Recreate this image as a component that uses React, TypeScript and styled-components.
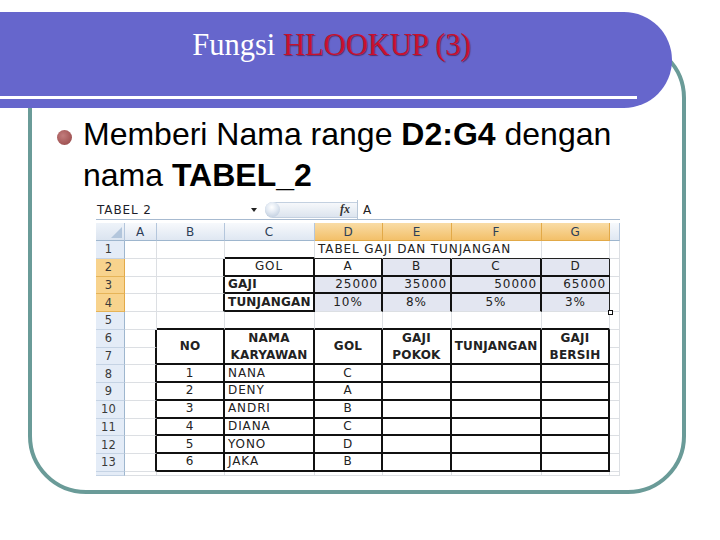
import React from 'react';
import styled, { createGlobalStyle } from 'styled-components';

const Global = createGlobalStyle`
  html, body { margin: 0; padding: 0; background: #fff; }
  body { font-family: "Liberation Sans", Arial, sans-serif; }
`;

const Slide = styled.div`
  width: 720px;
  height: 540px;
  display: grid;
  grid-template: 1fr / 1fr;
  overflow: hidden;
  background: #fff;
`;

const Frame = styled.div`
  grid-area: 1 / 1;
  margin: 40px 34px 46px 28px;
  border: 4px solid #6a9b98;
  border-radius: 58px;
`;

const Header = styled.header`
  grid-area: 1 / 1;
  align-self: start;
  margin-top: 12px;
  width: 672px;
  height: 96px;
  background: #6666cc;
  border-radius: 0 48px 48px 0;
  display: flex;
  flex-direction: column;
  z-index: 1;
`;

const Title = styled.h1`
  margin: 15px 0 0;
  padding-right: 9px;
  text-align: center;
  font: 400 30.5px/36px "Liberation Serif", "Times New Roman", serif;
  color: #fff;
`;

const Accent = styled.span`
  color: #c8102e;
  text-shadow: 1px 1px 1px rgba(70, 0, 20, 0.55);
`;

const Rule = styled.div`
  margin-top: auto;
  margin-bottom: 9px;
  width: 637px;
  height: 3px;
  background: #fff;
`;

const Content = styled.main`
  grid-area: 1 / 1;
  z-index: 2;
  padding-top: 114px;
  display: flex;
  flex-direction: column;
`;

const BulletRow = styled.div`
  display: flex;
  align-items: flex-start;
  padding-left: 57px;
`;

const Dot = styled.span`
  flex-shrink: 0;
  width: 15px;
  height: 15px;
  margin-top: 16px;
  margin-right: 11px;
  border-radius: 50%;
  background: radial-gradient(circle at 40% 38%, #c27c7c 0%, #a65a5a 60%, #8e4848 100%);
`;

const BulletText = styled.p`
  margin: 0;
  max-width: 580px;
  font: 400 32px/41px "Liberation Sans", Arial, sans-serif;
  color: #000;
`;

const Strong = styled.strong`
  font-weight: 700;
`;

const Sheet = styled.div`
  margin: 4px 0 0 96px;
  width: 524px;
  display: flex;
  flex-direction: column;
  font-family: "DejaVu Sans", Verdana, sans-serif;
  font-size: 12px;
  letter-spacing: 0.9px;
  color: #222;
`;

const FormulaBar = styled.div`
  height: 19px;
  display: flex;
  align-items: center;
  border-bottom: 1px solid #a7bad0;
  margin-bottom: 3px;
`;

const NameBox = styled.div`
  width: 166px;
  box-sizing: border-box;
  padding: 0 5px 0 1px;
  display: flex;
  align-items: center;
  justify-content: space-between;
  color: #1d1d2a;
`;

const FxButton = styled.div`
  margin-left: 3px;
  width: 92px;
  height: 16px;
  box-sizing: border-box;
  display: flex;
  align-items: center;
  justify-content: space-between;
  border-radius: 8px 0 0 8px;
  border: 1px solid #c3d0e0;
  border-right: none;
  background: linear-gradient(#f6f8fb, #dce4ee);
  padding-right: 7px;
`;

const Knob = styled.span`
  width: 15px;
  height: 15px;
  margin-left: -1px;
  border-radius: 50%;
  background: radial-gradient(circle at 45% 35%, #ffffff 0%, #e3eaf3 40%, #b3c3d7 100%);
`;

const Fx = styled.span`
  font: italic 700 12px "Liberation Serif", serif;
  letter-spacing: 0;
  color: #333;
`;

const FormulaSep = styled.span`
  width: 1px;
  height: 19px;
  background: #b8c7d8;
  margin-right: 5px;
`;

const Grid = styled.div`
  display: grid;
  grid-template-columns: 29px 32px 68px 90px 68px 69px 90px 68px 10px;
  grid-template-rows: 18px repeat(13, 17.75px) 4px;
`;

type Edge = 'grid' | 'thick' | 'thin' | 'none';

const edgeCss = (e: Edge) =>
  e === 'thick'
    ? '2px solid #111'
    : e === 'thin'
    ? '1px solid #222'
    : e === 'none'
    ? '1px solid transparent'
    : '1px solid #dcdfe3';

const ColHead = styled.div<{ $sel?: boolean }>`
  display: flex;
  align-items: center;
  justify-content: center;
  border-right: 1px solid ${(p) => (p.$sel ? '#e2a948' : '#b4c6dc')};
  border-bottom: 1px solid ${(p) => (p.$sel ? '#e2a948' : '#9eb6ce')};
  background: ${(p) =>
    p.$sel ? 'linear-gradient(#f9dca6, #f3c069)' : 'linear-gradient(#f7f9fc, #dfe7f2)'};
  color: #2c3e57;
`;

const Corner = styled.div`
  display: flex;
  align-items: flex-end;
  justify-content: flex-end;
  padding: 0 2px 2px 0;
  border-right: 1px solid #b4c6dc;
  border-bottom: 1px solid #9eb6ce;
  background: linear-gradient(#eef3f9, #dbe4f0);
`;

const RowHead = styled.div<{ $sel?: boolean }>`
  display: flex;
  align-items: center;
  justify-content: center;
  padding-right: 3px;
  border-right: 1px solid ${(p) => (p.$sel ? '#e2a948' : '#9eb6ce')};
  border-bottom: 1px solid ${(p) => (p.$sel ? '#e6b458' : '#c5d3e4')};
  background: ${(p) => (p.$sel ? '#f8d38d' : '#e4ecf7')};
  color: #3a3a3a;
  font-size: 11.5px;
  letter-spacing: 0.3px;
  overflow: hidden;
`;

const Cell = styled.div<{
  $r: Edge;
  $b: Edge;
  $bg?: string;
  $align?: 'left' | 'center' | 'right';
  $bold?: boolean;
}>`
  position: relative;
  min-width: 0;
  display: flex;
  flex-direction: column;
  justify-content: center;
  align-items: ${(p) =>
    p.$align === 'right' ? 'flex-end' : p.$align === 'center' ? 'center' : 'flex-start'};
  padding: 0 3px;
  border-right: ${(p) => edgeCss(p.$r)};
  border-bottom: ${(p) => edgeCss(p.$b)};
  background: ${(p) => p.$bg ?? 'transparent'};
  font-weight: ${(p) => (p.$bold ? 700 : 400)};
  letter-spacing: ${(p) => (p.$bold ? '0.2px' : '0.9px')};
  white-space: nowrap;
  line-height: 17px;
`;

const Handle = styled.span`
  position: absolute;
  right: -4px;
  bottom: -4px;
  width: 5px;
  height: 5px;
  box-sizing: border-box;
  border: 1px solid #111;
  background: #fff;
  z-index: 3;
`;

type Content = { text: string[]; align?: 'left' | 'center' | 'right'; bold?: boolean };

const data: Record<string, Content> = {
  '1-4': { text: ['TABEL GAJI DAN TUNJANGAN'] },
  '2-3': { text: ['GOL'], align: 'center' },
  '2-4': { text: ['A'], align: 'center' },
  '2-5': { text: ['B'], align: 'center' },
  '2-6': { text: ['C'], align: 'center' },
  '2-7': { text: ['D'], align: 'center' },
  '3-3': { text: ['GAJI'], bold: true },
  '3-4': { text: ['25000'], align: 'right' },
  '3-5': { text: ['35000'], align: 'right' },
  '3-6': { text: ['50000'], align: 'right' },
  '3-7': { text: ['65000'], align: 'right' },
  '4-3': { text: ['TUNJANGAN'], bold: true },
  '4-4': { text: ['10%'], align: 'center' },
  '4-5': { text: ['8%'], align: 'center' },
  '4-6': { text: ['5%'], align: 'center' },
  '4-7': { text: ['3%'], align: 'center' },
};

const mergedHead: Content[] = [
  { text: ['NO'], align: 'center', bold: true },
  { text: ['NAMA', 'KARYAWAN'], align: 'center', bold: true },
  { text: ['GOL'], align: 'center', bold: true },
  { text: ['GAJI', 'POKOK'], align: 'center', bold: true },
  { text: ['TUNJANGAN'], align: 'center', bold: true },
  { text: ['GAJI', 'BERSIH'], align: 'center', bold: true },
];

const employees: [string, string, string][] = [
  ['1', 'NANA', 'C'],
  ['2', 'DENY', 'A'],
  ['3', 'ANDRI', 'B'],
  ['4', 'DIANA', 'C'],
  ['5', 'YONO', 'D'],
  ['6', 'JAKA', 'B'],
];
employees.forEach(([no, name, gol], i) => {
  const r = 8 + i;
  data[`${r}-2`] = { text: [no], align: 'center' };
  data[`${r}-3`] = { text: [name] };
  data[`${r}-4`] = { text: [gol], align: 'center' };
});

const rightEdge = (r: number, c: number): Edge => {
  if (r >= 2 && r <= 4) {
    if (c >= 2 && c <= 6) return 'thick';
    if (c === 7) return 'thin';
  }
  if (r >= 6 && r <= 13 && c >= 1 && c <= 7) return 'thick';
  if (r === 1 && (c === 4 || c === 5)) return 'none';
  return 'grid';
};

const bottomEdge = (r: number, c: number): Edge => {
  if (r === 1) {
    if (c === 3) return 'thick';
    if (c >= 4 && c <= 7) return 'thin';
  }
  if ((r === 2 || r === 3) && c >= 3 && c <= 7) return 'thick';
  if (r === 4 && c === 3) return 'thick';
  if (r === 5 && c >= 2 && c <= 7) return 'thick';
  if (r >= 7 && r <= 13 && c >= 2 && c <= 7) return 'thick';
  return 'grid';
};

const COLS = ['A', 'B', 'C', 'D', 'E', 'F', 'G', ''];
const SHADE = '#e3e6f1';

function SheetGrid() {
  const items: React.ReactNode[] = [];
  items.push(
    <Corner key="corner" style={{ gridRow: 1, gridColumn: 1 }}>
      <svg width="11" height="11" viewBox="0 0 11 11">
        <polygon points="11,0 11,11 0,11" fill="#b3c6dc" />
      </svg>
    </Corner>
  );
  COLS.forEach((l, i) => {
    items.push(
      <ColHead key={`ch${i}`} $sel={i >= 3 && i <= 6} style={{ gridRow: 1, gridColumn: i + 2 }}>
        {l}
      </ColHead>
    );
  });
  for (let r = 1; r <= 14; r++) {
    items.push(
      <RowHead key={`rh${r}`} $sel={r >= 2 && r <= 4} style={{ gridRow: r + 1, gridColumn: 1 }}>
        {r <= 13 ? r : ''}
      </RowHead>
    );
    for (let c = 1; c <= 8; c++) {
      if ((r === 6 || r === 7) && c >= 2 && c <= 7) {
        if (r === 6) {
          const h = mergedHead[c - 2];
          items.push(
            <Cell
              key={`m${c}`}
              $r="thick"
              $b="thick"
              $align={h.align}
              $bold={h.bold}
              style={{ gridRow: '7 / span 2', gridColumn: c + 1 }}
            >
              {h.text.map((t) => (
                <span key={t}>{t}</span>
              ))}
            </Cell>
          );
        }
        continue;
      }
      const d = data[`${r}-${c}`];
      const shaded = r >= 2 && r <= 4 && c >= 4 && c <= 7 && !(r === 2 && c === 4);
      items.push(
        <Cell
          key={`c${r}-${c}`}
          $r={rightEdge(r, c)}
          $b={bottomEdge(r, c)}
          $bg={shaded ? SHADE : undefined}
          $align={d?.align}
          $bold={d?.bold}
          style={{ gridRow: r + 1, gridColumn: c + 1 }}
        >
          {d?.text.map((t) => (
            <span key={t}>{t}</span>
          ))}
          {r === 4 && c === 7 && <Handle />}
        </Cell>
      );
    }
  }
  return <Grid>{items}</Grid>;
}

export default function App() {
  return (
    <>
      <Global />
      <Slide>
        <Frame />
        <Header>
          <Title>
            Fungsi <Accent>HLOOKUP (3)</Accent>
          </Title>
          <Rule />
        </Header>
        <Content>
          <BulletRow>
            <Dot />
            <BulletText>
              Memberi Nama range <Strong>D2:G4</Strong> dengan nama <Strong>TABEL_2</Strong>
            </BulletText>
          </BulletRow>
          <Sheet>
            <FormulaBar>
              <NameBox>
                <span>TABEL 2</span>
                <svg width="6" height="4" viewBox="0 0 6 4">
                  <polygon points="0,0 6,0 3,4" fill="#222" />
                </svg>
              </NameBox>
              <FxButton>
                <Knob />
                <Fx>fx</Fx>
              </FxButton>
              <FormulaSep />
              <span>A</span>
            </FormulaBar>
            <SheetGrid />
          </Sheet>
        </Content>
      </Slide>
    </>
  );
}
